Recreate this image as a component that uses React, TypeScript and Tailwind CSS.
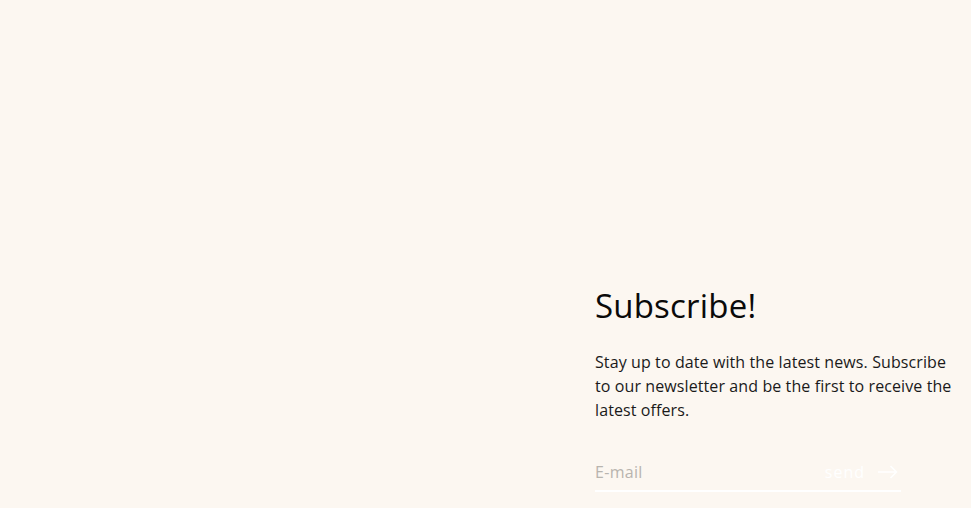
export default function App() {
  return (
    <div className="min-h-screen bg-[#fcf7f1] font-['Open_Sans',sans-serif] text-[#111111] overflow-hidden">
      <div className="flex">
        {/* empty media column */}
        <div className="w-[595px] shrink-0" />

        {/* Newsletter signup */}
        <div className="w-[362px] pt-[284px]">
          <h2 className="text-[33px] leading-[44px] tracking-[0.2px] font-normal text-[#0a0a0a]">
            Subscribe!
          </h2>
          <p className="mt-[22px] text-[16px] leading-[24px] tracking-[0.1px] text-[#1a1a1a]">
            Stay up to date with the latest news. Subscribe to our newsletter and be the first to receive the latest offers.
          </p>

          <form className="mt-[38px] w-[306px] flex items-center border-b-2 border-white pb-[6px]">
            <input
              type="email"
              placeholder="E-mail"
              className="flex-1 min-w-0 bg-transparent outline-none text-[16px] leading-[24px] tracking-[0.3px] placeholder:text-[#b8b4ae]"
            />
            <button type="button" className="flex items-center gap-[13px] pr-[3px] text-white text-[16px] leading-[24px] tracking-[1px]">
              send
              <svg width="20" height="14" viewBox="0 0 20 14" fill="none" stroke="currentColor" strokeWidth="1.6">
                <path d="M0 7h18.5M12.5 1l6 6-6 6" />
              </svg>
            </button>
          </form>
        </div>
      </div>
    </div>
  );
}
